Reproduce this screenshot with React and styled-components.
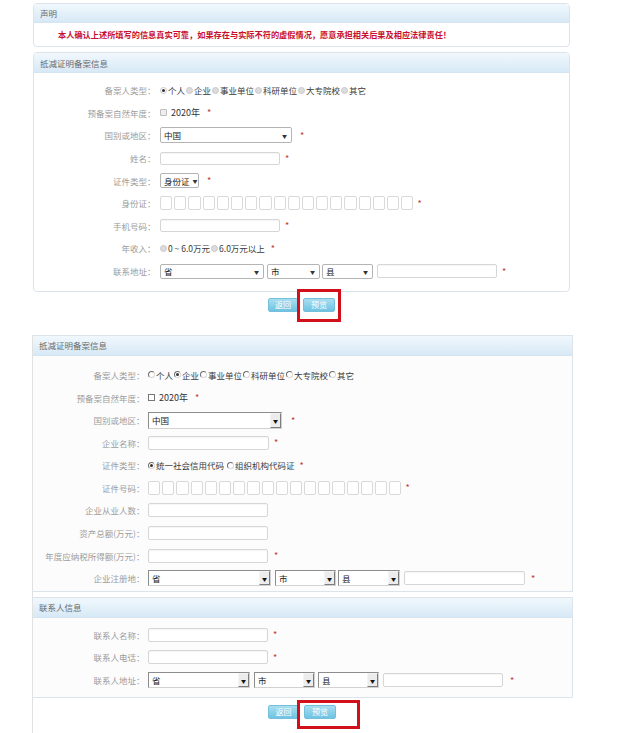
import React from 'react'
import styled, { createGlobalStyle } from 'styled-components'

const GlobalStyle = createGlobalStyle`
  *, *::before, *::after { box-sizing: border-box; }
  html, body { margin: 0; padding: 0; background: #fff; }
  body {
    font-family: "Noto Sans CJK SC", "Noto Sans", sans-serif;
    overflow: hidden;
  }
`

const Page = styled.div`
  padding-top: 3px;
`

const Section = styled.div`
  margin-left: ${p => p.$left}px;
  width: ${p => p.$width}px;
  margin-top: ${p => p.$top || 0}px;
  ${p => p.$rail && `
    border-left: 1px solid #e1e1e1;
    padding-bottom: 40px;
  `}
`

const Panel = styled.div`
  border: 1px solid #dde3ea;
  border-left: ${p => (p.$rail ? 'none' : '1px solid #dde3ea')};
  border-radius: ${p => (p.$square ? 0 : 4)}px;
  overflow: hidden;
  background: ${p => p.$tint || '#fff'};
  margin-top: ${p => p.$gap || 0}px;
`

const PanelHead = styled.div`
  height: ${p => p.$h || 20}px;
  display: flex;
  align-items: center;
  padding-left: 6px;
  background: linear-gradient(#f1f8fd, #d7e9f6);
  border-bottom: 1px solid #d4e4f0;
  font-size: 8.5px;
  color: #6a6a6a;
`

const Notice = styled.p`
  margin: 0;
  height: 23px;
  line-height: 23px;
  padding-left: 24px;
  font-size: 8.2px;
  font-weight: bold;
  color: #c8102e;
  white-space: nowrap;
  text-align: left;
`

const Form = styled.div`
  display: grid;
  grid-template-columns: ${p => p.$label}px 1fr;
  grid-auto-rows: 22.6px;
  column-gap: ${p => p.$gap}px;
  align-items: center;
  padding: ${p => p.$pad};
`

const Label = styled.div`
  text-align: right;
  font-size: 8.5px;
  color: #9c9c9c;
  white-space: nowrap;
`

const Field = styled.div`
  display: flex;
  align-items: center;
  font-size: 8.5px;
  color: #3a3a3a;
  white-space: nowrap;
`

const Option = styled.span`
  display: inline-flex;
  align-items: center;
  margin-right: ${p => p.$space || 1}px;
`

const Radio = styled.span`
  position: relative;
  display: inline-block;
  width: 7px;
  height: 7px;
  margin-right: 1px;
  border-radius: 50%;
  border: 1px solid;
  border-color: ${p => (p.$classic ? '#6d6d6d #d6d6d6 #d6d6d6 #6d6d6d' : '#c9c9c9')};
  background: ${p => (p.$classic ? '#fff' : p.$on ? '#fff' : '#dcdcdc')};

  &::after {
    content: '';
    display: ${p => (p.$on ? 'block' : 'none')};
    position: absolute;
    left: 1px;
    top: 1px;
    width: 3px;
    height: 3px;
    border-radius: 50%;
    background: #333;
  }
`

const Check = styled.span`
  display: inline-block;
  width: 7px;
  height: 7px;
  margin-right: 4px;
  border: 1px solid ${p => (p.$classic ? '#777' : '#bdbdbd')};
  background: ${p => (p.$classic ? '#fff' : '#eee')};
  border-radius: ${p => (p.$classic ? 0 : 1)}px;
`

const Year = styled.span`
  font-size: 9px;
  color: #333;
`

const Select = styled.div`
  width: ${p => p.$w}px;
  height: ${p => p.$h || 15}px;
  margin-right: ${p => p.$gap || 0}px;
  display: flex;
  align-items: center;
  justify-content: space-between;
  padding-left: 3px;
  padding-right: ${p => (p.$classic ? 0 : 4)}px;
  background: #fff;
  border: 1px solid;
  border-color: ${p => (p.$classic ? '#8c8c8c #d2d2d2 #d2d2d2 #8c8c8c' : '#b4b4b4')};
  border-radius: ${p => (p.$classic ? 0 : 2)}px;
  font-size: 8.5px;
  color: #222;
`

const Caret = styled.span`
  margin-left: 3px;
  font-size: 5px;
  color: #333;
`

const DropButton = styled.span`
  align-self: stretch;
  width: 11px;
  display: flex;
  align-items: center;
  justify-content: center;
  border: 1px solid;
  border-color: #f4f4f4 #7d7d7d #7d7d7d #f4f4f4;
  background: #ececec;
  font-size: 5px;
  color: #111;
`

const Input = styled.input`
  width: ${p => p.$w || 120}px;
  height: ${p => p.$h || 13}px;
  margin: 0 ${p => p.$gap || 0}px 0 0;
  padding: 0;
  border: 1px solid #d6d6d6;
  border-radius: 2px;
  background: #fff;
  box-shadow: inset 0 1px 1px rgba(0, 0, 0, 0.04);
  outline: none;
`

const Boxes = styled.div`
  display: flex;
  gap: 2px;
`

const Box = styled.span`
  width: 12.2px;
  height: 14px;
  border: 1px solid #d9d9d9;
  border-radius: 2px;
  background: #fff;
`

const Req = styled.span`
  margin-left: ${p => p.$gap ?? 6}px;
  color: #c0392b;
  font-size: 9px;
  line-height: 1;
`

const Buttons = styled.div`
  display: flex;
  justify-content: center;
  gap: 5px;
  margin-top: ${p => p.$top}px;
  padding-right: ${p => p.$shift || 0}px;
`

const Marked = styled.span`
  position: relative;
  display: inline-flex;
`

const Mark = styled.span`
  position: absolute;
  top: -${p => p.$t}px;
  left: -${p => p.$l}px;
  right: -${p => p.$r}px;
  bottom: -${p => p.$b}px;
  border: 3px solid #d2101c;
  pointer-events: none;
`

const Btn = styled.button`
  width: ${p => p.$w || 30}px;
  height: 14px;
  padding: 0;
  border: 1px solid #74bfdc;
  border-radius: 2px;
  background: linear-gradient(#a9def0, #6ec3e2);
  color: #fff;
  font-family: inherit;
  font-size: 8px;
  line-height: 1;
`

const ids = Array.from({ length: 18 })

const types = ['个人', '企业', '事业单位', '科研单位', '大专院校', '其它']

const Types = ({ on, classic }) => (
  <Field>
    {types.map(t => (
      <Option key={t}>
        <Radio $on={t === on} $classic={classic} />
        {t}
      </Option>
    ))}
  </Field>
)

const Pick = ({ w, text, classic, gap, h }) => (
  <Select $w={w} $classic={classic} $gap={gap} $h={h}>
    <span>{text}</span>
    {classic ? <DropButton>▼</DropButton> : <Caret>▼</Caret>}
  </Select>
)

const IdBoxes = () => (
  <Boxes>
    {ids.map((_, i) => (
      <Box key={i} />
    ))}
  </Boxes>
)

const App = () => {
  return (
    <Page>
      <GlobalStyle />

      <Section $left={33} $width={537}>
        <Panel>
          <PanelHead $h={19}>声明</PanelHead>
          <Notice>本人确认上述所填写的信息真实可靠，如果存在与实际不符的虚假情况，愿意承担相关后果及相应法律责任！</Notice>
        </Panel>

        <Panel $gap={5}>
          <PanelHead>抵减证明备案信息</PanelHead>
          <Form $label={121.5} $gap={4.5} $pad="6px 0 8.6px">
            <Label>备案人类型：</Label>
            <Types on="个人" />

            <Label>预备案自然年度：</Label>
            <Field>
              <Check />
              <Year>2020年</Year>
              <Req $gap={7}>*</Req>
            </Field>

            <Label>国别或地区：</Label>
            <Field>
              <Pick w={132} h={16} text="中国" />
              <Req $gap={8}>*</Req>
            </Field>

            <Label>姓名：</Label>
            <Field>
              <Input readOnly />
              <Req $gap={5}>*</Req>
            </Field>

            <Label>证件类型：</Label>
            <Field>
              <Pick w={39} text="身份证" />
              <Req $gap={8}>*</Req>
            </Field>

            <Label>身份证：</Label>
            <Field>
              <IdBoxes />
              <Req $gap={4}>*</Req>
            </Field>

            <Label>手机号码：</Label>
            <Field>
              <Input readOnly />
              <Req $gap={5}>*</Req>
            </Field>

            <Label>年收入：</Label>
            <Field>
              <Option $space={1}>
                <Radio />0 ~ 6.0万元
              </Option>
              <Option>
                <Radio />6.0万元以上
              </Option>
              <Req $gap={5}>*</Req>
            </Field>

            <Label>联系地址：</Label>
            <Field>
              <Pick w={104} text="省" gap={3} />
              <Pick w={53} text="市" gap={2} />
              <Pick w={51} text="县" gap={4} />
              <Input readOnly $h={14} />
              <Req $gap={5}>*</Req>
            </Field>
          </Form>
        </Panel>

        <Buttons $top={6}>
          <Btn $w={30}>返回</Btn>
          <Marked>
            <Btn $w={32}>预览</Btn>
            <Mark $t={9} $l={6} $r={6} $b={10} />
          </Marked>
        </Buttons>
      </Section>

      <Section $left={32} $width={541} $top={23} $rail>
        <Panel $square $rail $tint="#fdfcfd">
          <PanelHead>抵减证明备案信息</PanelHead>
          <Form $label={111.5} $gap={3.5} $pad="7.7px 0 1.3px">
            <Label>备案人类型：</Label>
            <Types on="企业" classic />

            <Label>预备案自然年度：</Label>
            <Field>
              <Check $classic />
              <Year>2020年</Year>
              <Req $gap={7}>*</Req>
            </Field>

            <Label>国别或地区：</Label>
            <Field>
              <Pick w={134} h={17} text="中国" classic />
              <Req $gap={9}>*</Req>
            </Field>

            <Label>企业名称：</Label>
            <Field>
              <Input readOnly $w={121} $h={14} />
              <Req $gap={5}>*</Req>
            </Field>

            <Label>证件类型：</Label>
            <Field>
              <Option $space={3}>
                <Radio $classic $on />统一社会信用代码
              </Option>
              <Option>
                <Radio $classic />组织机构代码证
              </Option>
              <Req $gap={4}>*</Req>
            </Field>

            <Label>证件号码：</Label>
            <Field>
              <IdBoxes />
              <Req $gap={4}>*</Req>
            </Field>

            <Label>企业从业人数：</Label>
            <Field>
              <Input readOnly $h={14} />
            </Field>

            <Label>资产总额(万元)：</Label>
            <Field>
              <Input readOnly $h={14} />
            </Field>

            <Label>年度应纳税所得额(万元)：</Label>
            <Field>
              <Input readOnly $h={14} />
              <Req $gap={6}>*</Req>
            </Field>

            <Label>企业注册地：</Label>
            <Field>
              <Pick w={123} h={16} text="省" classic gap={4} />
              <Pick w={61} h={16} text="市" classic gap={2} />
              <Pick w={62} h={16} text="县" classic gap={4} />
              <Input readOnly $w={121} $h={14} />
              <Req $gap={6}>*</Req>
            </Field>
          </Form>
        </Panel>

        <Panel $square $rail $gap={5} $tint="#fdfcfd">
          <PanelHead>联系人信息</PanelHead>
          <Form $label={111.5} $gap={3.5} $pad="5.7px 0 5.5px">
            <Label>联系人名称：</Label>
            <Field>
              <Input readOnly $h={14} />
              <Req $gap={5}>*</Req>
            </Field>

            <Label>联系人电话：</Label>
            <Field>
              <Input readOnly $h={14} />
              <Req $gap={5}>*</Req>
            </Field>

            <Label>联系人地址：</Label>
            <Field>
              <Pick w={102} h={16} text="省" classic gap={4} />
              <Pick w={61} h={16} text="市" classic gap={3} />
              <Pick w={61} h={16} text="县" classic gap={4} />
              <Input readOnly $h={14} />
              <Req $gap={7}>*</Req>
            </Field>
          </Form>
        </Panel>

        <Buttons $top={7} $shift={2}>
          <Btn $w={31}>返回</Btn>
          <Marked>
            <Btn $w={32}>预览</Btn>
            <Mark $t={5} $l={7} $r={24} $b={10} />
          </Marked>
        </Buttons>
      </Section>
    </Page>
  )
}

export default App
